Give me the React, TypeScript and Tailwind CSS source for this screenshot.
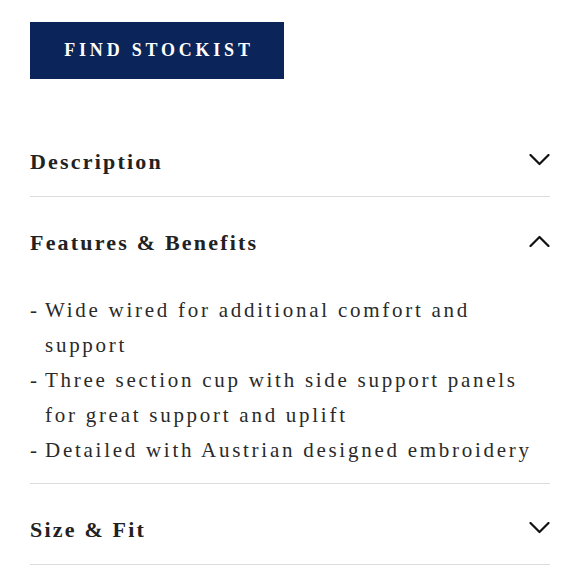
import React, { useState } from 'react';

const serif = { fontFamily: '"Liberation Serif", "Times New Roman", serif' };

const Chevron = ({ up }: { up?: boolean }) => (
  <svg width="21" height="12" viewBox="0 0 21 12" className="shrink-0 mt-[-4px]">
    <polyline
      points={up ? '1.5,11 10.5,2 19.5,11' : '1.5,1 10.5,10 19.5,1'}
      fill="none"
      stroke="#111"
      strokeWidth="2.2"
      strokeLinecap="round"
      strokeLinejoin="round"
    />
  </svg>
);

const features = [
  'Wide wired for additional comfort and support',
  'Three section cup with side support panels for great support and uplift',
  'Detailed with Austrian designed embroidery',
];

type Section = { id: string; title: string };

const sections: Section[] = [
  { id: 'description', title: 'Description' },
  { id: 'features', title: 'Features & Benefits' },
  { id: 'size', title: 'Size & Fit' },
];

export default function App() {
  const [open, setOpen] = useState<string | null>('features');

  return (
    <div className="w-[580px] h-[580px] bg-white overflow-hidden" style={serif}>
      <div className="pl-[30px] pr-[30px] pt-[22px]">
        <button className="w-[254px] h-[57px] bg-[#0b2459] text-white text-[18px] font-bold tracking-[0.21em] pl-[4px] flex items-center justify-center">
          FIND STOCKIST
        </button>

        <div className="mt-[37px]">
          {sections.map((s) => {
            const isOpen = open === s.id;
            return (
              <div key={s.id} className="border-b border-[#dcdcdc]">
                <button
                  onClick={() => setOpen(isOpen ? null : s.id)}
                  className="w-full flex items-center justify-between pt-[31px] pb-[19px] text-left"
                >
                  <span className="text-[22px] leading-[30px] font-bold text-[#222] tracking-[0.1em]">
                    {s.title}
                  </span>
                  <Chevron up={isOpen} />
                </button>
                {isOpen && s.id === 'features' && (
                  <ul className="pt-[16px] pb-[15px] text-[21px] leading-[35px] text-[#2a2a2a] tracking-[0.13em]">
                    {features.map((f) => (
                      <li key={f} className="flex">
                        <span className="w-[15px] shrink-0 tracking-normal">-</span>
                        <span>{f}</span>
                      </li>
                    ))}
                  </ul>
                )}
              </div>
            );
          })}
        </div>
      </div>
    </div>
  );
}
